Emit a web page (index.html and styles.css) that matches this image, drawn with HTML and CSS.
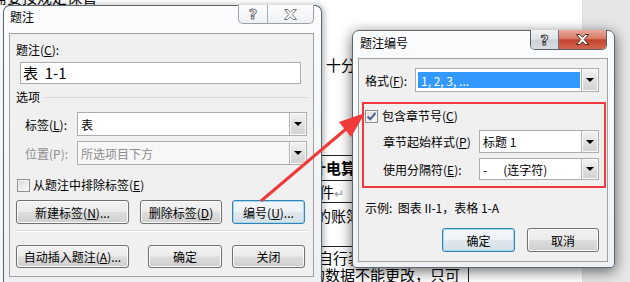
FILE: index.html
```html
<!DOCTYPE html>
<html lang="zh-CN">
<head>
    <meta charset="UTF-8">
    <title>题注</title>
    <link rel="stylesheet" href="styles.css">
</head>
<body>
    <!-- document behind the dialogs -->
    <div class="frag frag-top">需要按规定保管</div>
    <div class="frag frag-mid">：十分</div>
    <div class="doc-table">
        <div class="doc-row r1"><b>计电算化</b></div>
        <div class="doc-row r2">文件<span class="ret">↵</span></div>
        <div class="doc-row r3">目的账簿</div>
        <div class="doc-row r4">
            <div>各自行装订</div>
            <div class="last">的数据不能更改，只可<span class="cell-line"></span></div>
        </div>
    </div>

    <!-- caption dialog -->
    <div class="win dlg-caption">
        <div class="titlebar">
            <span class="title">题注</span>
            <div class="caption-btns">
                <span class="cbtn help">?</span>
                <span class="cbtn close">
                    <svg width="13" height="11" viewBox="0 0 13 11"><polygon points="0.5,0.5 3.8,0.5 6.5,3.3 9.2,0.5 12.5,0.5 8.3,5.5 12.5,10.5 9.2,10.5 6.5,7.7 3.8,10.5 0.5,10.5 4.7,5.5" fill="#fff" stroke="#777" stroke-width="1"/></svg>
                </span>
            </div>
        </div>
        <div class="panel panel-caption">
            <div class="field-label">题注(<u>C</u>):</div>
            <div class="textbox">表&nbsp;&nbsp;1-1</div>
            <div class="group-head"><span>选项</span><i class="rule"></i></div>
            <div class="row row-indent row-first">
                <span>标签(<u>L</u>):</span>
                <div class="select w230"><span class="val">表</span><span class="drop"></span></div>
            </div>
            <div class="row row-indent row-next disabled">
                <span>位置(P):</span>
                <div class="select w230"><span class="val">所选项目下方</span><span class="drop"></span></div>
            </div>
            <div class="check-row"><span class="check"></span>从题注中排除标签(<u>E</u>)</div>
            <div class="btn-row">
                <span class="btn w113">新建标签(<u>N</u>)...</span>
                <span class="btn w82 gap11">删除标签(<u>D</u>)</span>
                <span class="btn w73 gap10 focus">编号(<u>U</u>)...</span>
            </div>
            <div class="sep"></div>
            <div class="btn-row btn-row-last">
                <span class="btn w113 h23">自动插入题注(<u>A</u>)...</span>
                <span class="btn w74 h23 gap19">确定</span>
                <span class="btn w73 h23 gap10">关闭</span>
            </div>
        </div>
    </div>

    <!-- numbering dialog -->
    <div class="win dlg-number">
        <div class="titlebar">
            <span class="title">题注编号</span>
            <div class="caption-btns active">
                <span class="cbtn help">?</span>
                <span class="cbtn close">
                    <svg width="13" height="11" viewBox="0 0 13 11"><polygon points="0.5,0.5 3.8,0.5 6.5,3.3 9.2,0.5 12.5,0.5 8.3,5.5 12.5,10.5 9.2,10.5 6.5,7.7 3.8,10.5 0.5,10.5 4.7,5.5" fill="#fff" stroke="#4a2a24" stroke-width="1"/></svg>
                </span>
            </div>
        </div>
        <div class="panel panel-num">
            <div class="row">
                <span>格式(<u>F</u>):</span>
                <div class="select w184"><span class="val hl-wrap"><span class="hl">1, 2, 3, ...</span></span><span class="drop"></span></div>
            </div>
            <div class="mark-box">
                <div class="check-row"><span class="check on"><svg width="11" height="11" viewBox="0 0 11 11"><path d="M1.5 5.5 L4.3 8.3 L9.5 1.8" fill="none" stroke="#4b5f93" stroke-width="2"/></svg></span>包含章节号(<u>C</u>)</div>
                <div class="row sub sub1">
                    <span>章节起始样式(<u>P</u>)</span>
                    <div class="select w120 h23"><span class="val">标题 1</span><span class="drop"></span></div>
                </div>
                <div class="row sub sub2">
                    <span>使用分隔符(<u>E</u>):</span>
                    <div class="select w120 h22"><span class="val"><span class="dash">-</span>(连字符)</span><span class="drop"></span></div>
                </div>
            </div>
            <div class="example">示例:&nbsp;&nbsp;图表 II-1，表格 1-A</div>
            <div class="btn-row btn-row-right">
                <span class="btn w73 focus">确定</span>
                <span class="btn w72 gap12">取消</span>
            </div>
        </div>
    </div>

    <!-- annotation arrow -->
    <svg class="arrow" width="630" height="282" viewBox="0 0 630 282">
        <line x1="261" y1="201" x2="346" y2="129" stroke="#f03a3a" stroke-width="3"/>
        <polygon points="365,113 351,137 339,122" fill="#f03a3a"/>
    </svg>
</body>
</html>
```

FILE: styles.css
```css
* {
    box-sizing: border-box;
}
body {
    margin: 0;
    width: 630px;
    height: 282px;
    overflow: hidden;
    position: relative;
    background: linear-gradient(to right, #fff 582px, #d6d6d6 582px, #e6e6e6 583px);
    font-family: "Noto Sans CJK SC", "Noto Sans", sans-serif;
    font-size: 12px;
    color: #000;
}
u {
    text-decoration: underline;
    text-underline-offset: 1px;
}

/* document fragments */
.frag {
    position: absolute;
    font-size: 15px;
    line-height: 18px;
    white-space: nowrap;
}
.frag-top {
    left: -8px;
    top: -12px;
}
.frag-mid {
    left: 311px;
    top: 56px;
}
.doc-table {
    position: absolute;
    left: 320px;
    top: 155px;
    width: 200px;
    height: 127px;
    overflow: hidden;
    font-size: 15px;
    line-height: 18px;
    white-space: nowrap;
}
.doc-row {
    border-top: 1px solid #222;
    margin-left: -9px;
}
.r1 {
    height: 25px;
    padding-top: 3px;
}
.r2 {
    height: 22px;
    padding-top: 2px;
    margin-left: -16px;
}
.r3 {
    height: 44px;
    padding-top: 4px;
    margin-left: -19px;
}
.r4 {
    margin-left: -17px;
    padding-top: 2px;
    line-height: 17px;
}
.r4 .last {
    margin-left: 7px;
    display: flex;
    align-items: flex-start;
}
.cell-line {
    display: inline-block;
    width: 1px;
    height: 17px;
    margin-left: 8px;
    background: #222;
}
.ret {
    color: #999;
    font-size: 12px;
}

/* windows */
.win {
    position: absolute;
    border: 1px solid #5d6770;
    border-radius: 7px 7px 0 0;
    background: linear-gradient(#fbfcfd, #eef0f3);
}
.dlg-caption {
    left: 3px;
    top: 5px;
    width: 319px;
    height: 277px;
    border-bottom: none;
    box-shadow: 2px 0 6px rgba(0, 0, 0, 0.3);
}
.dlg-number {
    left: 352px;
    top: 30px;
    width: 263px;
    height: 238px;
    border-radius: 7px 7px 4px 4px;
    box-shadow: 0 3px 14px rgba(0, 0, 0, 0.6);
}
.titlebar {
    display: flex;
    justify-content: space-between;
    align-items: flex-start;
    height: 27px;
    padding-left: 6px;
}
.dlg-number .titlebar {
    padding-left: 7px;
}
.title {
    line-height: 22px;
}
.dlg-number .title {
    line-height: 24px;
}
.caption-btns {
    display: flex;
    height: 19px;
    margin-top: -1px;
    margin-right: 7px;
    border: 1px solid #98a0a8;
    border-top: none;
    border-radius: 0 0 5px 5px;
    overflow: hidden;
    background: linear-gradient(#fdfdfe, #eef1f4);
}
.cbtn {
    display: flex;
    align-items: center;
    justify-content: center;
    height: 100%;
}
.cbtn.help {
    width: 29px;
    border-right: 1px solid #a9afb5;
    font-family: "DejaVu Sans", sans-serif;
    font-weight: bold;
    font-size: 14px;
    color: #fff;
    -webkit-text-stroke: 1px #777;
}
.cbtn.close {
    width: 45px;
}
.caption-btns.active {
    height: 20px;
    border-color: #5a6068;
}
.caption-btns.active .help {
    width: 28px;
    background: linear-gradient(#f1f3f5 0%, #e0e4e8 48%, #cdd2d8 52%, #d9dde2 100%);
    -webkit-text-stroke: 1px #3c3c3c;
    border-right-color: #6c7178;
}
.caption-btns.active .close {
    width: 47px;
    background: linear-gradient(#e9aa9d 0%, #d87863 45%, #c4422f 52%, #d4654f 100%);
}

/* panels */
.panel {
    margin-left: 5px;
    border: 1px solid #a0a0a0;
    background: #f0f0f0;
}
.panel-caption {
    width: 305px;
    padding: 0 6px 8px;
}
.field-label {
    margin-top: 8px;
    line-height: 16px;
}
.textbox {
    margin: 4px 0 0 4px;
    width: 281px;
    height: 22px;
    border: 1px solid #abadb3;
    background: #fff;
    font-size: 15px;
    line-height: 20px;
    padding-left: 2px;
}
.group-head {
    display: flex;
    align-items: center;
    margin-top: 5px;
    line-height: 16px;
}
.group-head .rule {
    flex: 1;
    height: 1px;
    margin-left: 5px;
    background: #d0dae3;
}
.row {
    display: flex;
    align-items: center;
    justify-content: space-between;
}
.row-indent {
    padding-left: 9px;
}
.row-first {
    margin-top: 7px;
}
.row-next {
    margin-top: 5px;
}
.disabled {
    color: #8d8d8d;
}

/* selects */
.select {
    display: flex;
    height: 24px;
    border: 1px solid #abadb3;
    background: #fff;
}
.disabled .select {
    background: #f7f7f7;
}
.w230 {
    width: 230px;
}
.w184 {
    width: 184px;
}
.w120 {
    width: 120px;
}
.h23 {
    height: 23px;
}
.h22 {
    height: 22px;
}
.val {
    flex: 1;
    padding-left: 3px;
    display: flex;
    align-items: center;
    white-space: nowrap;
}
.hl-wrap {
    padding: 3px 1px 3px 2px;
}
.hl {
    display: block;
    width: 100%;
    height: 100%;
    background: #3399ff;
    color: #fff;
    line-height: 17px;
    padding-left: 3px;
}
.dash {
    margin-right: 16px;
}
.drop {
    width: 17px;
    border-left: 1px solid #b4b4b4;
    background: linear-gradient(#f4f4f4, #e0e0e0 50%, #d2d2d2);
    box-shadow: inset 0 0 0 1px #fafafa;
    display: flex;
    align-items: center;
    justify-content: center;
}
.drop::after {
    content: "";
    border-left: 4px solid transparent;
    border-right: 4px solid transparent;
    border-top: 4px solid #000;
}

/* checkbox */
.check-row {
    display: flex;
    align-items: center;
    line-height: 16px;
}
.panel-caption .check-row {
    margin-top: 12px;
    height: 16px;
}
.check {
    width: 13px;
    height: 13px;
    margin: 0 3px 0 1px;
    border: 1px solid #8e8f8f;
    background: linear-gradient(135deg, #d8d8d8, #fcfcfc);
    box-shadow: inset 0 0 0 1px #f2f2f2;
    display: flex;
    align-items: center;
    justify-content: center;
}
.check.on {
    margin: 0 4px 0 0;
}

/* buttons */
.btn-row {
    display: flex;
    margin-top: 7px;
}
.btn-row-last {
    margin-top: 13px;
}
.btn {
    height: 24px;
    display: flex;
    align-items: center;
    justify-content: center;
    border: 1px solid #707070;
    border-radius: 3px;
    background: linear-gradient(#f2f2f2 0%, #ebebeb 48%, #dddddd 52%, #cfcfcf 100%);
    box-shadow: inset 0 0 0 1px #fbfbfb;
    white-space: nowrap;
}
.btn.focus {
    border-color: #3c7fb1;
    background: linear-gradient(#f4f8fb 0%, #edf2f6 48%, #e0e8ee 52%, #d6dfe6 100%);
    box-shadow: inset 0 0 0 1px #9ddcf7;
}
.btn.h23 {
    height: 23px;
}
.w113 {
    width: 113px;
}
.w82 {
    width: 82px;
}
.w74 {
    width: 74px;
}
.w73 {
    width: 73px;
}
.w72 {
    width: 72px;
}
.gap10 {
    margin-left: 10px;
}
.gap11 {
    margin-left: 11px;
}
.gap12 {
    margin-left: 12px;
}
.gap19 {
    margin-left: 19px;
}
.sep {
    margin-top: 6px;
    height: 2px;
    border-top: 1px solid #d5dfe5;
    border-bottom: 1px solid #fff;
}

/* numbering panel */
.panel-num {
    width: 250px;
    padding: 9px 8px 9px 6px;
}
.mark-box {
    margin: 10px -7px 0 -3px;
    border: 2px solid #ee3b3b;
    padding: 4px 5px 6px 1px;
}
.sub {
    padding-left: 18px;
}
.sub1 {
    margin-top: 6px;
}
.sub2 {
    margin-top: 5px;
}
.example {
    margin-top: 12px;
    line-height: 16px;
}
.btn-row-right {
    justify-content: flex-end;
    margin-top: 12px;
}

.arrow {
    position: absolute;
    left: 0;
    top: 0;
    pointer-events: none;
}
```
